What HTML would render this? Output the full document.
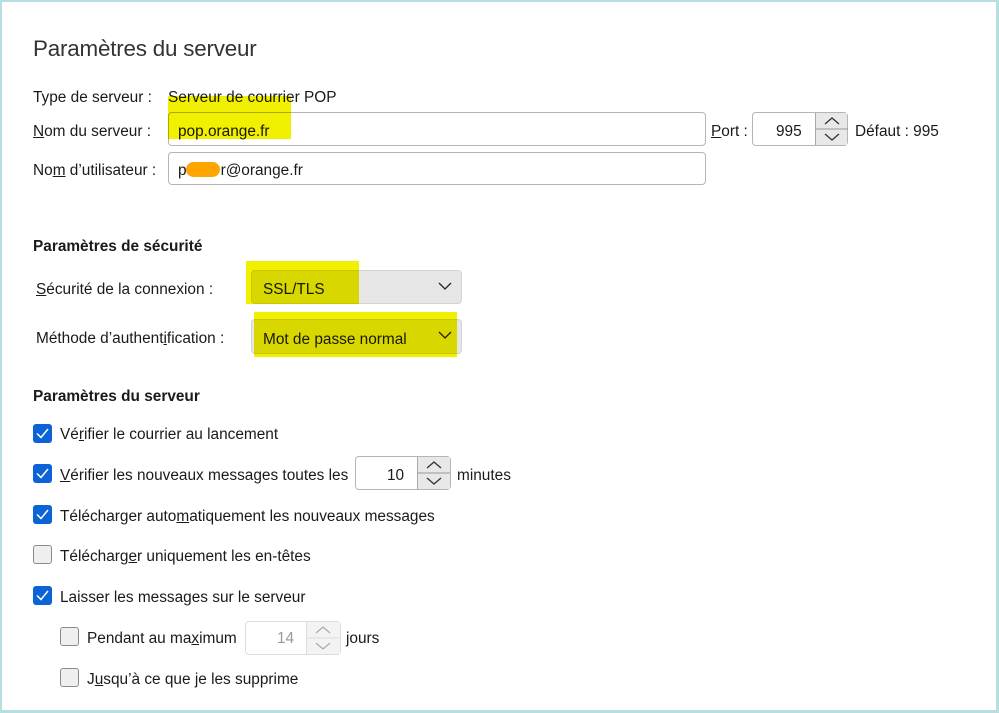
<!DOCTYPE html>
<html><head><meta charset="utf-8"><style>
*{margin:0;padding:0;box-sizing:border-box}
body{width:999px;height:713px;background:#fff;font-family:"Liberation Sans",sans-serif;font-size:15.4px;color:#1a1a1a;position:relative;overflow:hidden}
.frame{position:absolute;left:0;top:0;width:999px;height:713px;border:2px solid #b8dfdf;border-right-width:3px;border-bottom-width:3px}
.a{position:absolute;white-space:nowrap}
.t{line-height:20px;margin-top:2px}
.inp{position:absolute;border:1px solid #b5b5b5;border-radius:4px;background:#fff}
.hl{position:absolute;background:#f0f000;mix-blend-mode:multiply}
.sel{position:absolute;border:1px solid #d4d4d4;border-radius:4px;background:#e6e6e6}
.cb{position:absolute;width:19px;height:19px;border-radius:3px}
.on{background:#0b63d6}
.off{background:#efefef;border:1px solid #8a8a8a}
.spin{position:absolute;border-left:1px solid #aaa;background:#e8e8e8}
u{text-decoration:underline}
</style></head><body>
<div class="frame"></div>
<div class="a" style="left:33px;top:36px;font-size:22.4px;color:#333;letter-spacing:-0.2px">Paramètres du serveur</div>

<div class="a t" style="left:33px;top:86px">Type de serveur :</div>
<div class="a t" style="left:168px;top:86px">Serveur de courrier POP</div>

<div class="a t" style="left:33px;top:120px"><u>N</u>om du serveur :</div>
<div class="inp" style="left:168px;top:112px;width:538px;height:34px"></div>
<div class="a t" style="left:178px;top:120px">pop.orange.fr</div>
<div class="hl" style="left:168px;top:96px;width:123px;height:43px"></div>

<div class="a t" style="left:711px;top:120px"><u>P</u>ort :</div>
<div class="inp" style="left:752px;top:112px;width:96px;height:34px"></div>
<div class="a t" style="left:776px;top:120px">995</div>
<div class="spin" style="left:815px;top:113px;width:32px;height:32px">
<svg width="32" height="32"><line x1="0" y1="16" x2="32" y2="16" stroke="#999"/><path d="M9 11 L16 5 L23 11" fill="none" stroke="#333" stroke-width="1.3"/><path d="M9 21 L16 27 L23 21" fill="none" stroke="#333" stroke-width="1.3"/></svg></div>
<div class="a t" style="left:855px;top:120px">Défaut : 995</div>

<div class="a t" style="left:33px;top:159px">No<u>m</u> d’utilisateur :</div>
<div class="inp" style="left:168px;top:152px;width:538px;height:33px"></div>
<div class="a t" style="left:178px;top:159px">p<span style="display:inline-block;width:34px"></span>r@orange.fr</div>
<div class="a" style="left:186px;top:162px;width:34px;height:15px;background:#ffa500;border-radius:8px"></div>

<div class="a t" style="left:33px;top:235px;font-weight:bold">Paramètres de sécurité</div>

<div class="a t" style="left:36px;top:278px"><u>S</u>écurité de la connexion :</div>
<div class="sel" style="left:251px;top:270px;width:211px;height:34px"></div>
<div class="a t" style="left:263px;top:278px">SSL/TLS</div>
<div class="hl" style="left:246px;top:261px;width:113px;height:43px"></div>
<svg class="a" style="left:438px;top:281px" width="14" height="10"><path d="M1 2 L7 8 L13 2" fill="none" stroke="#222" stroke-width="1.3"/></svg>

<div class="a t" style="left:36px;top:327px">Méthode d’authent<u>i</u>fication :</div>
<div class="sel" style="left:251px;top:319px;width:211px;height:35px"></div>
<div class="a t" style="left:263px;top:328px">Mot de passe normal</div>
<svg class="a" style="left:438px;top:330px" width="14" height="10"><path d="M1 2 L7 8 L13 2" fill="none" stroke="#222" stroke-width="1.3"/></svg>
<div class="hl" style="left:254px;top:312px;width:203px;height:45px"></div>

<div class="a t" style="left:33px;top:385px;font-weight:bold">Paramètres du serveur</div>

<div class="cb on" style="left:33px;top:424px"><svg width="19" height="19"><path d="M4 9.5 L8 13.5 L15 5" fill="none" stroke="#fff" stroke-width="1.5"/></svg></div>
<div class="a t" style="left:60px;top:423px">Vé<u>r</u>ifier le courrier au lancement</div>

<div class="cb on" style="left:33px;top:464px"><svg width="19" height="19"><path d="M4 9.5 L8 13.5 L15 5" fill="none" stroke="#fff" stroke-width="1.5"/></svg></div>
<div class="a t" style="left:60px;top:464px"><u>V</u>érifier les nouveaux messages toutes les</div>
<div class="inp" style="left:355px;top:456px;width:96px;height:34px"></div>
<div class="a t" style="left:387px;top:464px">10</div>
<div class="spin" style="left:417px;top:457px;width:33px;height:32px">
<svg width="32" height="32"><line x1="0" y1="16" x2="32" y2="16" stroke="#999"/><path d="M9 11 L16 5 L23 11" fill="none" stroke="#333" stroke-width="1.3"/><path d="M9 21 L16 27 L23 21" fill="none" stroke="#333" stroke-width="1.3"/></svg></div>
<div class="a t" style="left:457px;top:464px">minutes</div>

<div class="cb on" style="left:33px;top:505px"><svg width="19" height="19"><path d="M4 9.5 L8 13.5 L15 5" fill="none" stroke="#fff" stroke-width="1.5"/></svg></div>
<div class="a t" style="left:60px;top:505px">Télécharger auto<u>m</u>atiquement les nouveaux messages</div>

<div class="cb off" style="left:33px;top:545px"></div>
<div class="a t" style="left:60px;top:545px">Télécharg<u>e</u>r uniquement les en-têtes</div>

<div class="cb on" style="left:33px;top:586px"><svg width="19" height="19"><path d="M4 9.5 L8 13.5 L15 5" fill="none" stroke="#fff" stroke-width="1.5"/></svg></div>
<div class="a t" style="left:60px;top:586px">Laisser les messages sur le serveur</div>

<div class="cb off" style="left:60px;top:627px"></div>
<div class="a t" style="left:87px;top:627px">Pendant au ma<u>x</u>imum</div>
<div class="inp" style="left:245px;top:621px;width:96px;height:34px;border-color:#ddd"></div>
<div class="a t" style="left:277px;top:627px;color:#999">14</div>
<div class="spin" style="left:306px;top:622px;width:34px;height:32px;border-left-color:#ddd;background:#f3f3f3">
<svg width="32" height="32"><line x1="0" y1="16" x2="32" y2="16" stroke="#ddd"/><path d="M9 11 L16 5 L23 11" fill="none" stroke="#aaa" stroke-width="1.2"/><path d="M9 21 L16 27 L23 21" fill="none" stroke="#aaa" stroke-width="1.2"/></svg></div>
<div class="a t" style="left:346px;top:627px">jours</div>

<div class="cb off" style="left:60px;top:668px"></div>
<div class="a t" style="left:87px;top:668px">J<u>u</u>squ’à ce que je les supprime</div>
</body></html>
